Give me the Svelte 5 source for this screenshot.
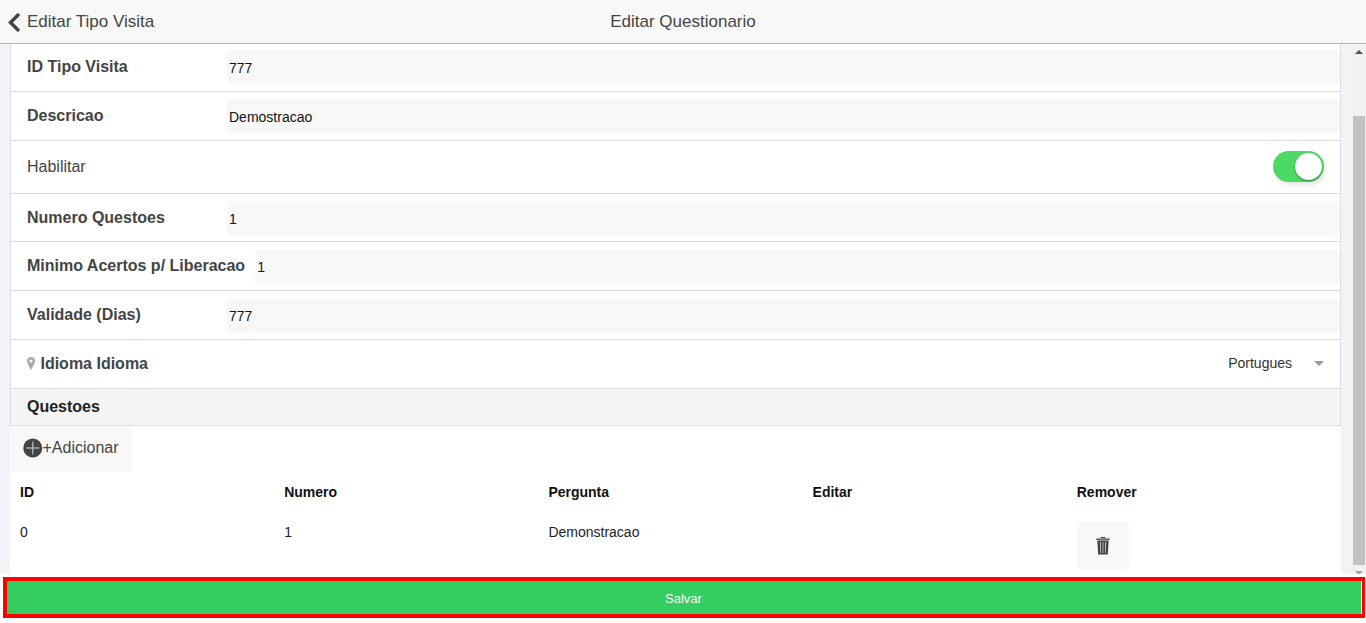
<script>
    const fields = [
        { id: "id", label: "ID Tipo Visita", value: "777", height: 48, pad: 6, labelTop: 7, inputTop: 2 },
        { id: "desc", label: "Descricao", value: "Demostracao", height: 49, pad: 7, labelTop: 7, inputTop: 2 }
    ];
    const fields2 = [
        { id: "num", label: "Numero Questoes", value: "1", height: 48, pad: 7, labelTop: 7, inputTop: 2 },
        { id: "min", label: "Minimo Acertos p/ Liberacao", value: "1", height: 49, pad: 8, labelTop: 6, inputTop: 0 },
        { id: "val", label: "Validade (Dias)", value: "777", height: 49, pad: 8, labelTop: 6, inputTop: 0 }
    ];
    const columns = ["ID", "Numero", "Pergunta", "Editar", "Remover"];
    let enabled = $state(true);
</script>

{#snippet field(f)}
    <div class="row" style="height: {f.height}px; padding-top: {f.pad}px">
        <span class="label" style="padding-top: {f.labelTop}px">{f.label}</span>
        <input class="input" style="padding-top: {f.inputTop}px" value={f.value} />
    </div>
{/snippet}

<div class="page">
    <header class="bar">
        <button class="back">
            <svg width="14" height="22" viewBox="0 0 14 22"><path d="M12 3 L3.500 11.500 L12 20" fill="none" stroke="#444" stroke-width="3.4" /></svg>
            <span>Editar Tipo Visita</span>
        </button>
        <h1 class="title">Editar Questionario</h1>
    </header>

    <div class="middle">
        <main class="content">
            <div class="card">
                {#each fields as f (f.id)}
                    {@render field(f)}
                {/each}
                <div class="row toggle-row">
                    <span>Habilitar</span>
                    <button class="toggle" class:on={enabled} onclick={() => (enabled = !enabled)}><span class="knob"></span></button>
                </div>
                {#each fields2 as f (f.id)}
                    {@render field(f)}
                {/each}
                <div class="row select-row">
                    <span class="label">
                        <svg class="pin" width="8" height="13" viewBox="0 0 8 13"><path fill-rule="evenodd" d="M4 0a4 4 0 0 1 4 4c0 2.500-2.600 6-4 9C2.600 10 0 6.500 0 4a4 4 0 0 1 4-4zm0 2.500a1.500 1.500 0 1 0 0 3 1.500 1.500 0 0 0 0-3z" fill="#aaa" /></svg>
                        Idioma Idioma
                    </span>
                    <span class="select">Portugues<i class="caret"></i></span>
                </div>
                <div class="divider">Questoes</div>
            </div>

            <div class="add">
                <button class="add-btn">
                    <svg width="19.500" height="20" viewBox="0 0 19.500 20"><circle cx="9.750" cy="10" r="9.500" fill="#444" /><path d="M9.750 3.500v13M3.250 10h13" stroke="#aaa" stroke-width="1.500" /></svg>
                    <span>+Adicionar</span>
                </button>
            </div>

            <div class="table">
                <div class="thead">
                    {#each columns as c}
                        <div class="cell">{c}</div>
                    {/each}
                </div>
                <div class="tbody">
                    <div class="cell text">0</div>
                    <div class="cell text">1</div>
                    <div class="cell text">Demonstracao</div>
                    <div class="cell"></div>
                    <div class="cell">
                        <button class="remove">
                            <svg width="14" height="18" viewBox="0 0 14 18"><path d="M5 1.300V.5h4v.8" fill="none" stroke="#444" /><path d="M.2 1.500h13.600v1.300H.2z" fill="#444" /><path fill-rule="evenodd" d="M1.300 3.500h11.400l-.9 14H2.200zM4.200 5l.3 11h.6L4.900 5zm2.500 0v11h.6V5zM9.100 5l-.2 11h.6L9.800 5z" fill="#444" /></svg>
                        </button>
                    </div>
                </div>
            </div>
        </main>

        <div class="scrollbar">
            <div class="arrow up"></div>
            <div class="track"><div class="thumb"></div></div>
            <div class="arrow down"></div>
        </div>
    </div>

    <footer class="footer">
        <button class="save">Salvar</button>
    </footer>
</div>

<style>
    :global(body) {
        margin: 0;
        background: #fff;
        font-family: "Liberation Sans", Arial, sans-serif;
        color: #444;
    }

    button {
        border: none;
        font-family: inherit;
        padding: 0;
    }

    .page {
        height: 623px;
        overflow: hidden;
    }

    .bar {
        height: 44px;
        box-sizing: border-box;
        border-bottom: 1px solid #b2b2b2;
        background: #f8f8f8;
        display: grid;
        grid-template-columns: 1fr auto 1fr;
        align-items: center;
    }

    .back {
        display: flex;
        align-items: center;
        gap: 6px;
        padding-left: 7px;
        background: none;
        color: #444;
        font-size: 17px;
        white-space: nowrap;
    }

    .title {
        margin: 0;
        text-align: center;
        font-size: 17px;
        font-weight: 400;
        color: #444;
    }

    .middle {
        height: 530px;
        display: flex;
        background: #f0f4f8;
    }

    .content {
        flex: 1;
        margin-left: 10px;
        margin-right: 10px;
        background: #fff;
        overflow: hidden;
    }

    .card {
        border: 1px solid #ddd;
        border-top: none;
        border-bottom: none;
    }

    .row {
        box-sizing: border-box;
        display: flex;
        align-items: flex-start;
        padding-left: 16px;
        border-bottom: 1px solid #ddd;
        font-size: 16px;
        line-height: 20px;
    }

    .label {
        font-weight: 700;
        color: #444;
        padding-right: 10px;
        min-width: 190px;
        white-space: nowrap;
    }

    .input {
        flex: 1;
        min-width: 0;
        height: 34px;
        box-sizing: border-box;
        border: none;
        outline: none;
        border-radius: 4px;
        background: #f8f8f8;
        padding: 2px 2px 0;
        font: 14px "Liberation Sans", Arial, sans-serif;
        color: #111;
    }

    .toggle-row {
        height: 53px;
        align-items: center;
        justify-content: space-between;
        padding-right: 16px;
        padding-bottom: 1px;
    }

    .toggle {
        width: 51px;
        height: 31px;
        border-radius: 16px;
        background: #e5e5e5;
        display: flex;
        align-items: center;
        padding: 2px;
        box-sizing: border-box;
        box-shadow: 2px 3px 5px rgba(0, 0, 0, 0.1);
    }

    .toggle.on {
        background: #4cd964;
        justify-content: flex-end;
    }

    .knob {
        width: 27px;
        height: 27px;
        border-radius: 50%;
        background: #fff;
        box-shadow: 0 1px 2px rgba(0, 0, 0, 0.4);
    }

    .select-row {
        height: 49px;
        align-items: center;
        justify-content: space-between;
        padding-right: 16px;
    }

    .pin {
        margin-right: 1px;
        vertical-align: -1px;
    }

    .select {
        display: flex;
        align-items: center;
        padding-bottom: 2px;
        font-size: 14px;
        color: #333;
    }

    .caret {
        margin-left: 22px;
        border-top: 5px solid #999;
        border-left: 5px solid transparent;
        border-right: 5px solid transparent;
    }

    .divider {
        height: 37px;
        box-sizing: border-box;
        line-height: 36px;
        padding-left: 16px;
        background: #f5f5f5;
        border-bottom: 1px solid #ddd;
        font-size: 16px;
        font-weight: 700;
        color: #222;
    }

    .add-btn {
        width: 122px;
        height: 46px;
        background: #f8f8f8;
        display: flex;
        align-items: center;
        padding: 0 0 2px 13px;
        box-sizing: border-box;
        color: #444;
        font-size: 16px;
    }

    .table {
        font-size: 14px;
        color: #222;
    }

    .thead,
    .tbody {
        display: grid;
        grid-template-columns: repeat(5, 264.2px);
    }

    .thead {
        height: 40px;
        align-items: center;
        font-weight: 700;
        color: #111;
    }

    .tbody {
        padding-top: 10px;
    }

    .cell {
        padding-left: 10px;
    }

    .cell.text {
        padding-top: 2px;
    }

    .remove {
        width: 52px;
        height: 47px;
        border-radius: 4px;
        background: #f8f8f8;
        display: flex;
        align-items: center;
        justify-content: center;
    }

    .scrollbar {
        width: 15px;
        overflow: hidden;
        background: #f1f1f1;
        display: flex;
        flex-direction: column;
        align-items: center;
    }

    .arrow {
        flex: none;
        height: 15px;
        display: flex;
        align-items: center;
        justify-content: center;
    }

    .arrow::before {
        content: "";
        border-left: 4px solid transparent;
        border-right: 4px solid transparent;
    }

    .up::before {
        border-bottom: 4px solid #505050;
    }

    .down::before {
        border-top: 4px solid #a3a3a3;
    }

    .track {
        flex: none;
        width: 100%;
        padding-top: 57px;
    }

    .thumb {
        height: 449px;
        margin: 0 1px 0 2px;
        background: #c1c1c1;
    }

    .footer {
        padding: 3px 1px 0 3px;
    }

    .save {
        display: block;
        width: 100%;
        height: 41px;
        box-sizing: border-box;
        padding: 2px 2px 0 0;
        border: 4px solid #f00;
        border-right-width: 3px;
        background: linear-gradient(to left, #fff 1px, #34ce60 1px);
        color: #fff;
        font-size: 13px;
    }
</style>
